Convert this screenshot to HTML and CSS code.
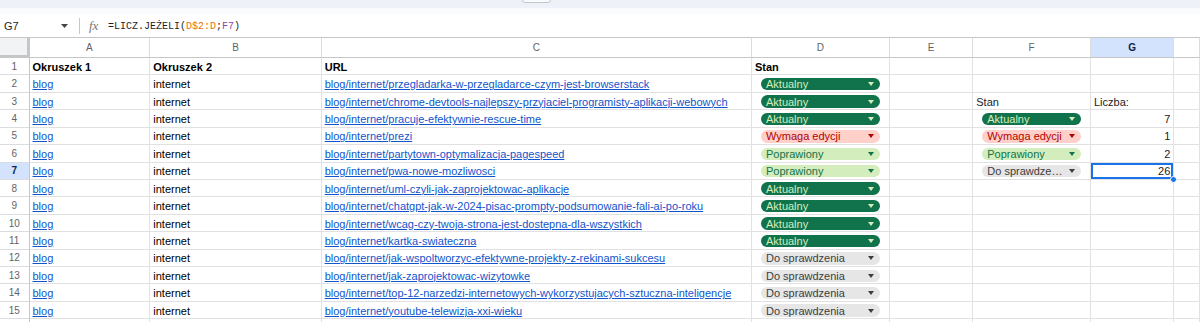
FILE: index.html
```html
<!DOCTYPE html>
<html lang="pl">
<head>
  <meta charset="UTF-8" />
  <title>Arkusz - blog</title>
  <link rel="stylesheet" href="styles.css">
</head>
<body>
  <div class="toolbar"><span class="toolbar-btn"></span></div>
  <div class="toolbar-gap"></div>

  <!-- PASEK FORMUŁY -->
  <div class="formula-bar">
    <div class="name-box">
      <span>G7</span>
      <svg width="7" height="4" viewBox="0 0 7 4"><path d="M0 0h7L3.5 4z" fill="#444"/></svg>
    </div>
    <div class="divider"></div>
    <span class="fx">fx</span>
    <span class="formula">=LICZ.JEŻELI(<span class="ref-d">D$2:D</span>;<span class="ref-f">F7</span>)</span>
  </div>

  <!-- ARKUSZ -->
  <div class="sheet" id="sheet"></div>

  <script>
    const cols = ['A', 'B', 'C', 'D', 'E', 'F', 'G', ''];
    const urls = [
      ['przegladarka-w-przegladarce-czym-jest-browserstack', 'Aktualny'],
      ['chrome-devtools-najlepszy-przyjaciel-programisty-aplikacji-webowych', 'Aktualny'],
      ['pracuje-efektywnie-rescue-time', 'Aktualny'],
      ['prezi', 'Wymaga edycji'],
      ['partytown-optymalizacja-pagespeed', 'Poprawiony'],
      ['pwa-nowe-mozliwosci', 'Poprawiony'],
      ['uml-czyli-jak-zaprojektowac-aplikacje', 'Aktualny'],
      ['chatgpt-jak-w-2024-pisac-prompty-podsumowanie-fali-ai-po-roku', 'Aktualny'],
      ['wcag-czy-twoja-strona-jest-dostepna-dla-wszystkich', 'Aktualny'],
      ['kartka-swiateczna', 'Aktualny'],
      ['jak-wspoltworzyc-efektywne-projekty-z-rekinami-sukcesu', 'Do sprawdzenia'],
      ['jak-zaprojektowac-wizytowke', 'Do sprawdzenia'],
      ['top-12-narzedzi-internetowych-wykorzystujacych-sztuczna-inteligencje', 'Do sprawdzenia'],
      ['youtube-telewizja-xxi-wieku', 'Do sprawdzenia']
    ];
    const chipClass = {
      'Aktualny': 'chip-ok',
      'Wymaga edycji': 'chip-edit',
      'Poprawiony': 'chip-fixed',
      'Do sprawdzenia': 'chip-check'
    };
    // podsumowanie w kolumnach F i G
    const summary = {
      3: ['<span class="plain">Stan</span>', '<span class="plain">Liczba:</span>'],
      4: [chip('Aktualny'), '<span class="num">7</span>'],
      5: [chip('Wymaga edycji'), '<span class="num">1</span>'],
      6: [chip('Poprawiony'), '<span class="num">2</span>'],
      7: [chip('Do sprawdzenia', 'Do sprawdze…'), '<span class="num">26</span>']
    };

    function chip(state, label) {
      return `<div class="chip ${chipClass[state]}"><span>${label || state}</span>
        <svg width="6" height="4" viewBox="0 0 6 4"><path d="M0 0h6L3 4z" fill="currentColor"/></svg></div>`;
    }

    function render() {
      const sheet = document.getElementById('sheet');
      let html = '<div class="corner"></div>';
      cols.forEach(c => {
        html += `<div class="col-head${c === 'G' ? ' active' : ''}">${c}</div>`;
      });

      const rows = [['<b>Okruszek 1</b>', '<b>Okruszek 2</b>', '<b>URL</b>', '<b>Stan</b>']];
      urls.forEach(([slug, state]) => {
        rows.push([
          '<a href="#">blog</a>',
          'internet',
          `<a href="#">blog/internet/${slug}</a>`,
          chip(state)
        ]);
      });
      rows.push(['', '', '', '']);

      rows.forEach((r, i) => {
        const n = i + 1;
        const s = summary[n] || ['', ''];
        // wiersz 16 jest ucięty na dole okna, numer nie jest widoczny
        html += `<div class="row-head${n === 7 ? ' active' : ''}">${n < 16 ? n : ''}</div>`;
        const cells = [...r, '', s[0], s[1], ''];
        cells.forEach((v, j) => {
          const sel = (n === 7 && j === 6) ? ' selected' : '';
          html += `<div class="cell${sel}">${v}</div>`;
        });
      });
      sheet.innerHTML = html;
    }

    render();
  </script>
</body>
</html>
```

FILE: styles.css
```css
body {
  font-family: "Liberation Sans", Arial, sans-serif;
  margin: 0;
  background: white;
  overflow: hidden;
}
.toolbar {
  height: 8px;
  background: #eef2f8;
  position: relative;
}
.toolbar-btn {
  position: absolute;
  left: 522px;
  top: -6px;
  width: 27px;
  height: 7px;
  border: 1px solid #c4c7c5;
  border-radius: 3px;
  background: #f8fafd;
}
.toolbar-gap {
  height: 6px;
  background: #f9fbfd;
}
.formula-bar {
  height: 24px;
  display: flex;
  align-items: center;
  border-bottom: 1px solid #c4c7c5;
  box-sizing: border-box;
  padding-top: 1px;
}
.name-box {
  width: 72px;
  display: flex;
  align-items: center;
  justify-content: space-between;
  padding: 0 4px 0 4px;
  box-sizing: border-box;
  font-size: 11px;
  color: #1f1f1f;
}
.divider {
  width: 1px;
  height: 16px;
  background: #c4c7c5;
  margin-left: 7px;
}
.fx {
  font-family: "Liberation Serif", serif;
  font-style: italic;
  color: #777;
  font-size: 13px;
  margin-left: 9px;
  width: 19px;
}
.formula {
  font-family: "Liberation Mono", monospace;
  font-size: 10px;
  color: #1f1f1f;
}
.ref-d {
  color: #e8710a;
}
.ref-f {
  color: #8e44ad;
}
.sheet {
  display: grid;
  grid-template-columns: 29.5px 120.8px 171.4px 430.3px 138px 83.3px 117.7px 83.3px 1fr;
  grid-template-rows: 20px repeat(16, 17.43px);
  font-size: 11px;
}
.corner {
  background: #f1f3f4;
  border-right: 3px solid #c4c7c5;
  border-bottom: 3px solid #c4c7c5;
  box-sizing: border-box;
}
.col-head {
  display: flex;
  align-items: center;
  justify-content: center;
  font-size: 10px;
  color: #5f6368;
  border-right: 1px solid #dadce0;
  border-bottom: 1px solid #c4c7c5;
  box-sizing: border-box;
}
.row-head {
  display: flex;
  align-items: center;
  justify-content: center;
  font-size: 10px;
  color: #5f6368;
  border-right: 1px solid #c4c7c5;
  border-bottom: 1px solid #dadce0;
  box-sizing: border-box;
}
.col-head.active, .row-head.active {
  background: #d3e3fd;
  color: #0b1f4a;
  font-weight: bold;
}
.cell {
  display: flex;
  align-items: center;
  padding: 1px 3px 0;
  border-right: 1px solid #e1e1e1;
  border-bottom: 1px solid #e1e1e1;
  box-sizing: border-box;
  white-space: nowrap;
  overflow: hidden;
  color: #000;
}
.cell a {
  color: #1155cc;
}
.cell.selected {
  box-shadow: inset 0 0 0 2px #1a73e8;
  overflow: visible;
  position: relative;
}
.cell.selected::after {
  content: '';
  position: absolute;
  right: -4px;
  bottom: -4px;
  width: 7px;
  height: 7px;
  border-radius: 50%;
  background: #1a73e8;
  border: 1px solid white;
  box-sizing: border-box;
}
.plain {
  color: #222;
}
.num {
  margin-left: auto;
  color: #222;
}
.chip {
  flex: 1;
  height: 12.5px;
  margin: 0 6px;
  padding: 0 6px 0 5px;
  border-radius: 7px;
  display: flex;
  align-items: center;
  justify-content: space-between;
  font-size: 11px;
}
.chip-ok {
  background: #11734b;
  color: #d4edbc;
}
.chip-edit {
  background: #ffcfc9;
  color: #b10202;
}
.chip-fixed {
  background: #d4edbc;
  color: #11734b;
}
.chip-check {
  background: #e6e6e6;
  color: #3d3d3d;
}
```
